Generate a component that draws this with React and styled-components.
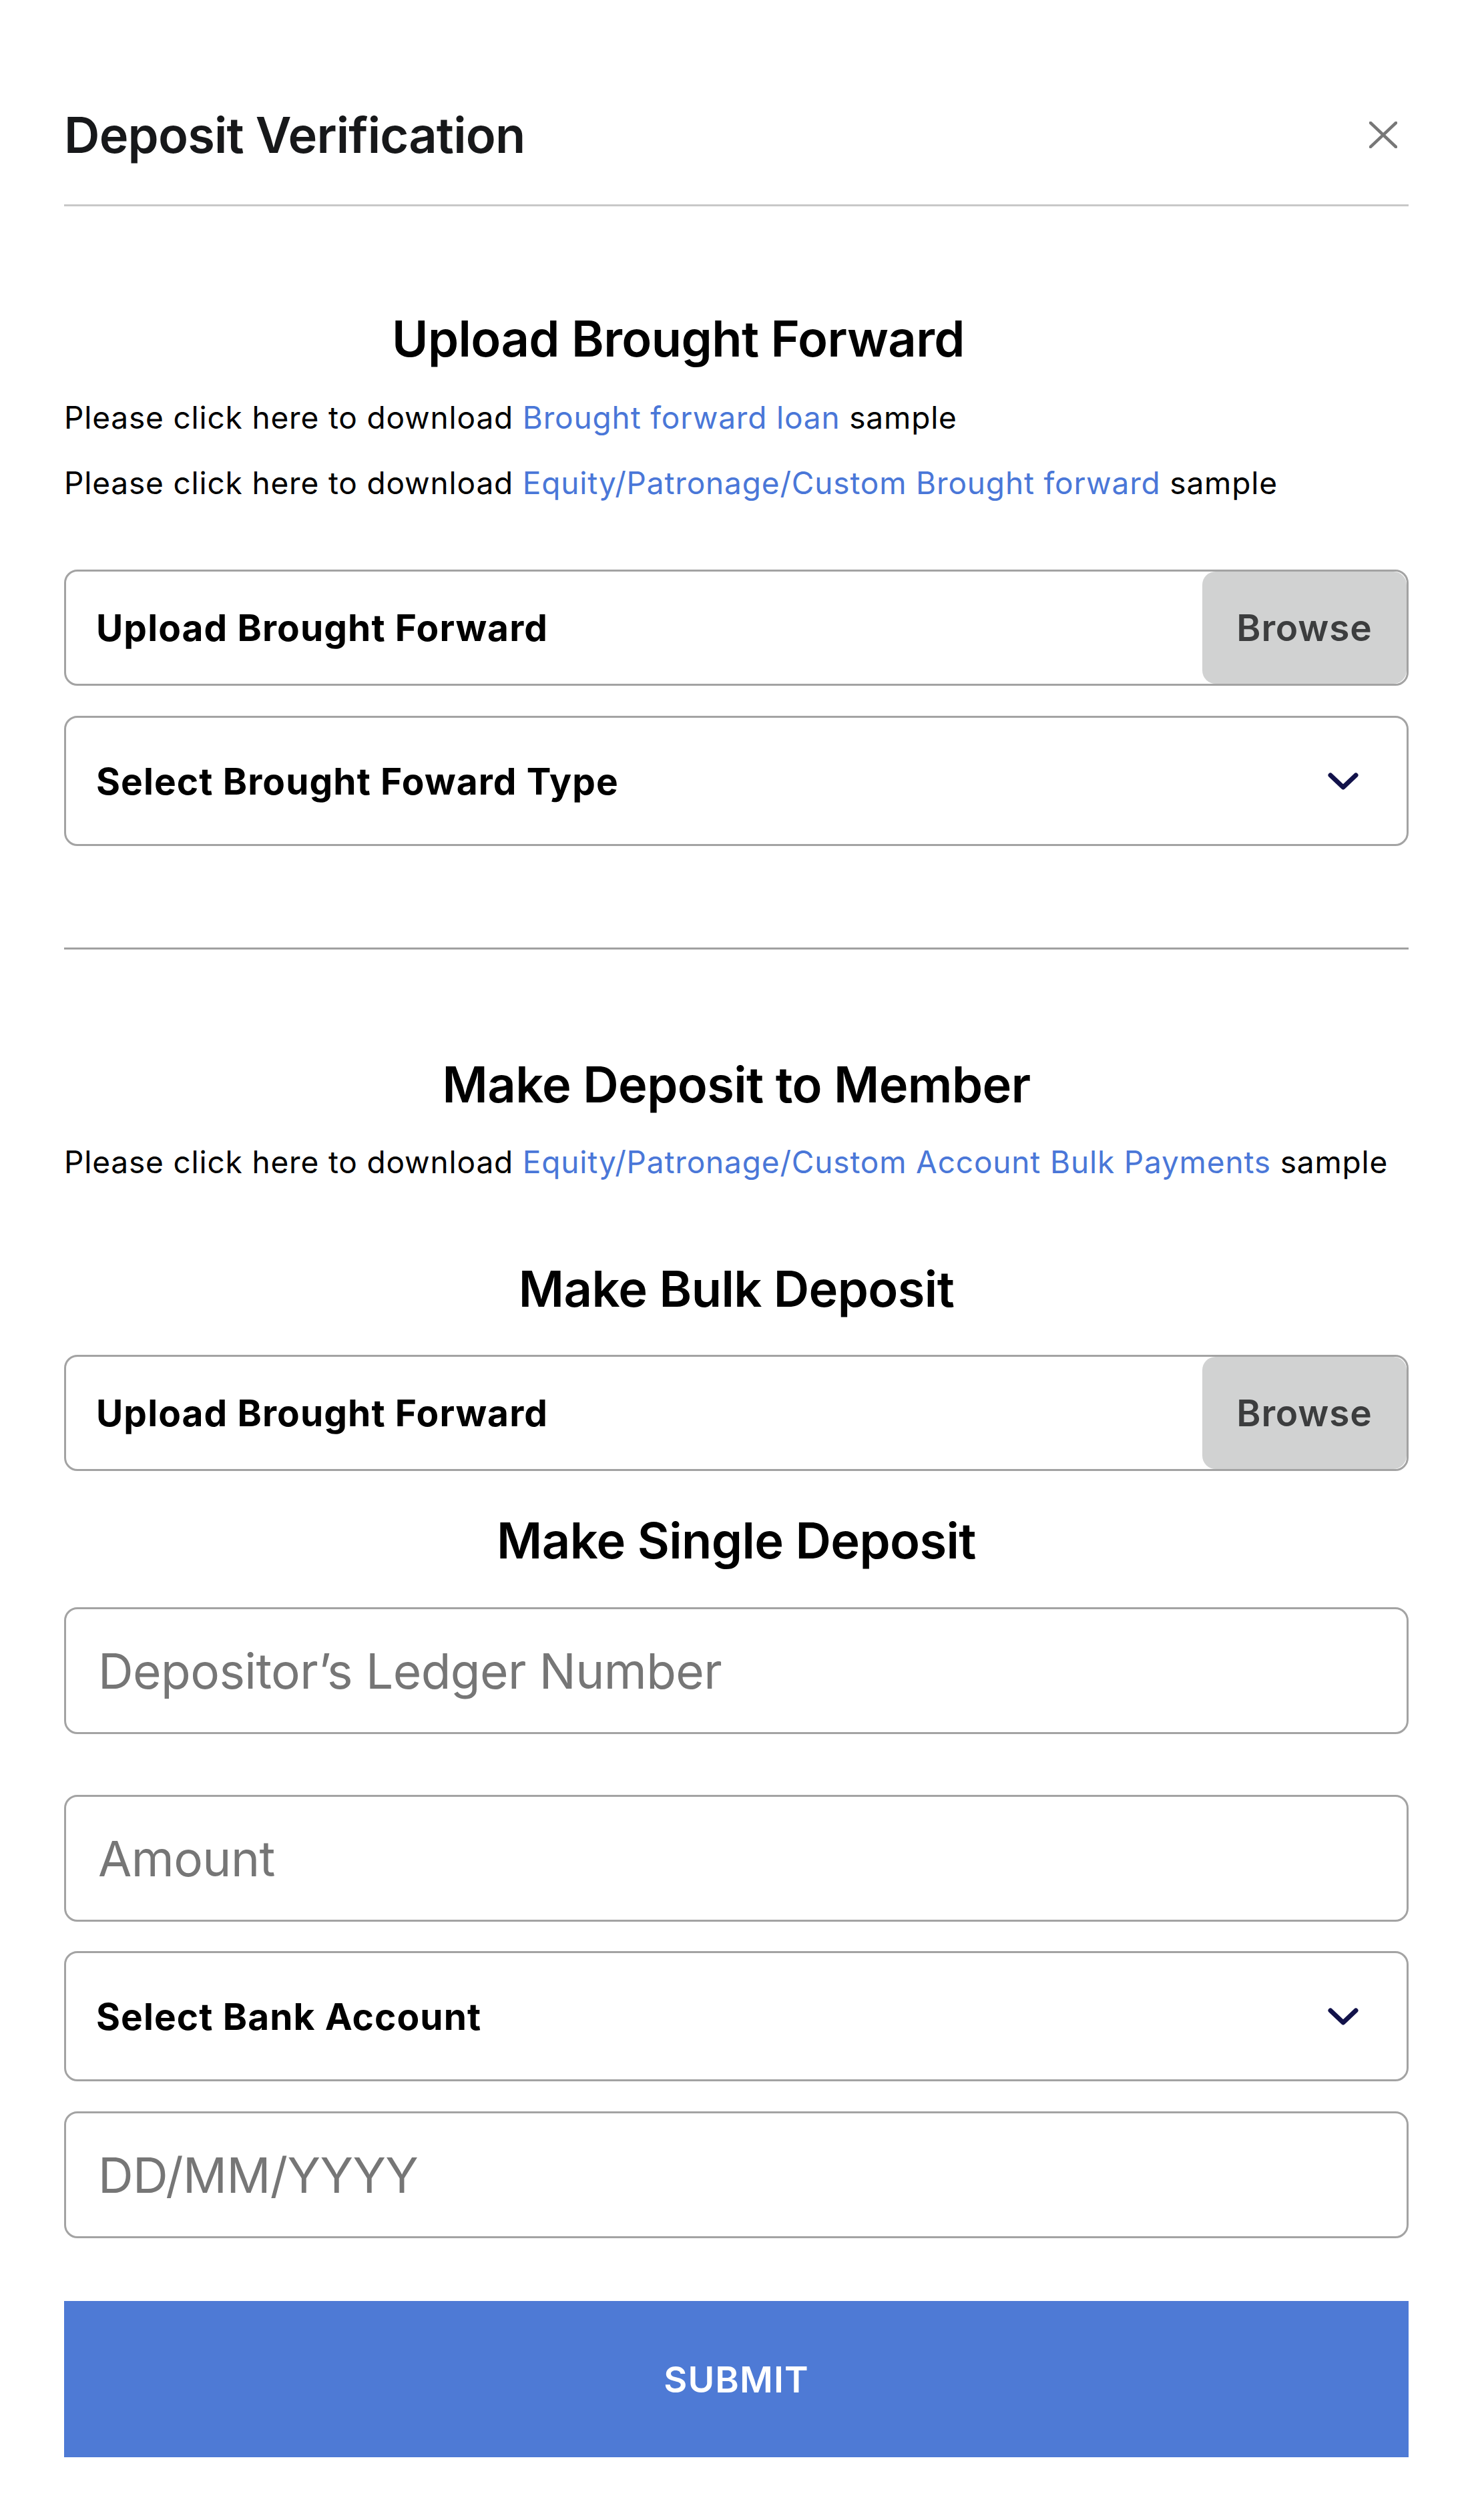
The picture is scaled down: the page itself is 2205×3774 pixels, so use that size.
import React from "react";
import styled, { createGlobalStyle } from "styled-components";

const Global = createGlobalStyle`
  html, body { margin: 0; padding: 0; background: #ffffff; }
  body { font-family: Inter, "Noto Sans", sans-serif; color: #111; }
  * { box-sizing: border-box; }
`;

const Page = styled.div`
  width: 2205px;
  min-height: 3774px;
  padding: 0 95px 93px 96px;
  display: flex;
  flex-direction: column;
`;

const Header = styled.header`
  display: flex;
  align-items: center;
  justify-content: space-between;
  padding-top: 165px;
  padding-bottom: 67px;
`;

const Title = styled.h1`
  margin: 0;
  font-size: 74px;
  line-height: 74px;
  font-weight: 600;
  letter-spacing: -0.011em;
  color: #17181a;
`;

const CloseButton = styled.button`
  border: none;
  background: transparent;
  padding: 0;
  margin-right: 17px;
  width: 42px;
  height: 40px;
  display: flex;
  align-items: center;
  justify-content: center;
  cursor: pointer;
`;

const Rule = styled.hr`
  margin: ${(p) => p.$mt || 0}px 0 0;
  border: none;
  height: 3px;
  background: ${(p) => p.$color};
`;

const SectionTitle = styled.h2`
  margin: ${(p) => p.$mt}px 0 0;
  padding-right: ${(p) => p.$shift || 0}px;
  font-size: 74px;
  line-height: 74px;
  font-weight: 600;
  letter-spacing: -0.008em;
  text-align: center;
  color: #000;
`;

const Note = styled.p`
  margin: ${(p) => p.$mt || 0}px 0 0;
  font-size: 46px;
  line-height: 98px;
  font-weight: 400;
  letter-spacing: 0.018em;
  color: #000;
  white-space: nowrap;
`;

const Link = styled.a`
  color: #4a77d8;
  text-decoration: none;
`;

const FieldBox = styled.div`
  margin-top: ${(p) => p.$mt}px;
  height: ${(p) => p.$h}px;
  border: 3px solid #a3a3a3;
  border-radius: 20px;
  display: flex;
  align-items: center;
  overflow: hidden;
  background: #fff;
`;

const FieldLabel = styled.span`
  flex: 1;
  padding-left: 45px;
  font-size: 55px;
  font-weight: 700;
  letter-spacing: 0.02em;
  color: #000;
`;

const BrowseButton = styled.span`
  align-self: stretch;
  width: 306px;
  background: #d1d2d2;
  border-radius: 20px;
  display: flex;
  align-items: center;
  justify-content: center;
  font-size: 55px;
  font-weight: 600;
  letter-spacing: 0.015em;
  color: #3c3d3e;
`;

const Chevron = styled.svg`
  margin-right: 71px;
  width: 48px;
  height: 28px;
  flex: none;
`;

const TextInput = styled.input`
  margin-top: ${(p) => p.$mt}px;
  height: 190px;
  width: 100%;
  border: 3px solid #a3a3a3;
  border-radius: 20px;
  padding: 0 0 0 48px;
  font-family: Inter, "Noto Sans", sans-serif;
  font-size: 73px;
  font-weight: 400;
  letter-spacing: -0.008em;
  color: #111;
  background: #fff;
  outline: none;
  &::placeholder {
    color: #767676;
  }
`;

const SubmitButton = styled.button`
  margin-top: 94px;
  height: 234px;
  width: 100%;
  border: none;
  border-radius: 0;
  background: #4e7ad5;
  color: #fff;
  font-family: Inter, "Noto Sans", sans-serif;
  font-size: 54px;
  font-weight: 600;
  letter-spacing: 0.02em;
  cursor: pointer;
`;

const Upload = ({ mt }) => (
  <FieldBox $mt={mt} $h={174}>
    <FieldLabel>Upload Brought Forward</FieldLabel>
    <BrowseButton>Browse</BrowseButton>
  </FieldBox>
);

const Select = ({ mt, children }) => (
  <FieldBox $mt={mt} $h={195}>
    <FieldLabel>{children}</FieldLabel>
    <Chevron viewBox="0 0 48 28" aria-hidden="true">
      <polyline
        points="5,5 24,23 43,5"
        fill="none"
        stroke="#12124a"
        strokeWidth="7"
        strokeLinecap="round"
        strokeLinejoin="round"
      />
    </Chevron>
  </FieldBox>
);

export default function App() {
  return (
    <>
      <Global />
      <Page>
        <Header>
          <Title>Deposit Verification</Title>
          <CloseButton aria-label="Close">
            <svg width="42" height="40" viewBox="0 0 42 40">
              <path d="M2 2 L40 38 M40 2 L2 38" stroke="#777" strokeWidth="4.5" strokeLinecap="square" />
            </svg>
          </CloseButton>
        </Header>
        <Rule $color="#c8c8c8" />

        <SectionTitle $mt={161} $shift={174}>Upload Brought Forward</SectionTitle>
        <Note $mt={32}>
          Please click here to download <Link href="#">Brought forward loan</Link> sample
        </Note>
        <Note>
          Please click here to download <Link href="#">Equity/Patronage/Custom Brought forward</Link> sample
        </Note>

        <Upload mt={81} />
        <Select mt={45}>Select Brought Foward Type</Select>

        <Rule $mt={152} $color="#a0a0a0" />

        <SectionTitle $mt={165}>Make Deposit to Member</SectionTitle>
        <Note $mt={30}>
          Please click here to download <Link href="#">Equity/Patronage/Custom Account Bulk Payments</Link> sample
        </Note>

        <SectionTitle $mt={104}>Make Bulk Deposit</SectionTitle>
        <Upload mt={62} />

        <SectionTitle $mt={67}>Make Single Deposit</SectionTitle>
        <TextInput $mt={63} placeholder="Depositor’s Ledger Number" />
        <TextInput $mt={91} placeholder="Amount" />
        <Select mt={44}>Select Bank Account</Select>
        <TextInput $mt={45} placeholder="DD/MM/YYYY" />

        <SubmitButton>SUBMIT</SubmitButton>
      </Page>
    </>
  );
}
